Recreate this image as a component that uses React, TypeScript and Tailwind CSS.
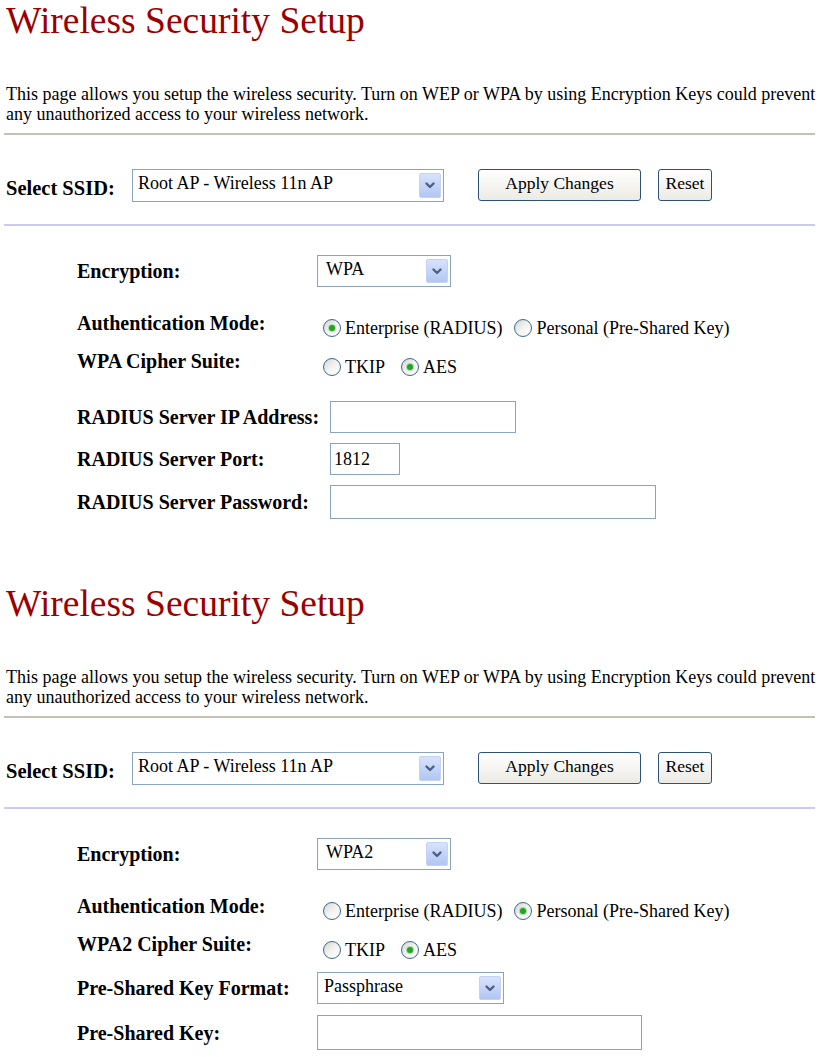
import React from 'react'
import clsx from 'clsx'

type Mode = 'wpa' | 'wpa2'

function Rule({ tone }: { tone: 'grey' | 'lavender' }) {
  return (
    <div
      className={clsx(
        '-ml-[2px] mr-[2px] h-[2px]',
        tone === 'grey' ? 'bg-[#c4c0b5]' : 'bg-[#cbcbf2]'
      )}
    />
  )
}

function Chevron() {
  return (
    <svg width="10" height="7" viewBox="0 0 10 7" fill="none">
      <path
        d="M1.5 1.5 L5 5 L8.5 1.5"
        stroke="#4d6185"
        strokeWidth="2.4"
        strokeLinecap="round"
        strokeLinejoin="round"
      />
    </svg>
  )
}

function Dropdown({
  value,
  className,
  textPad = 'pl-[5px]',
}: {
  value: string
  className?: string
  textPad?: string
}) {
  return (
    <div
      className={clsx(
        'flex shrink-0 items-center border border-[#8aa3c1] bg-white pr-[2px]',
        className
      )}
    >
      <span className={clsx('flex-1 pb-[3px] text-[18px] leading-normal whitespace-nowrap', textPad)}>
        {value}
      </span>
      <span className="flex h-[calc(100%-6px)] w-[22px] items-center justify-center rounded-[2px] border border-[#c4d2f7] bg-gradient-to-b from-[#d8e2fb] to-[#b2c6f3]">
        <Chevron />
      </span>
    </div>
  )
}

function Field({ value = '', className }: { value?: string; className?: string }) {
  return (
    <input
      readOnly
      value={value}
      className={clsx(
        'h-full shrink-0 border border-[#8aa3c1] bg-white px-[3px] text-[18px] outline-none',
        className
      )}
    />
  )
}

function Button({ children, className }: { children: React.ReactNode; className?: string }) {
  return (
    <button
      type="button"
      className={clsx(
        'flex h-[32px] shrink-0 items-center justify-center rounded-[3px] border-[1.5px] border-[#2e5277] bg-gradient-to-b from-white to-[#ebeae3] pb-[4px] text-[17.5px]',
        className
      )}
    >
      {children}
    </button>
  )
}

function Radio({ checked, label }: { checked?: boolean; label: string }) {
  return (
    <span className="flex items-center gap-[4px]">
      <span className="flex h-[18px] w-[18px] shrink-0 items-center justify-center rounded-full border-[1.5px] border-[#3d6890] bg-gradient-to-br from-[#d4d4ce] via-[#f3f3f1] to-white">
        {checked && (
          <span className="h-[6px] w-[6px] rounded-full bg-[#25a325] shadow-[0_0_0_1px_#a6e0a6]" />
        )}
      </span>
      <span className="text-[18px] leading-normal">{label}</span>
    </span>
  )
}

function Row({
  label,
  labelWidth = 'w-[240px]',
  className,
  children,
}: {
  label: string
  labelWidth?: string
  className?: string
  children: React.ReactNode
}) {
  return (
    <div className={clsx('flex items-center pl-[71px]', className)}>
      <span className={clsx('shrink-0 text-[20px] leading-normal font-bold', labelWidth)}>
        {label}
      </span>
      {children}
    </div>
  )
}

function SecuritySection({ mode, className }: { mode: Mode; className?: string }) {
  const isWpa2 = mode === 'wpa2'

  return (
    <section className={className}>
      <h1 className="text-[37.5px] leading-[41px] font-normal text-[#9b0000]">
        Wireless Security Setup
      </h1>
      <p className="mt-[43px] text-[18px] leading-[20px]">
        This page allows you setup the wireless security. Turn on WEP or WPA by using
        Encryption Keys could prevent any unauthorized access to your wireless network.
      </p>
      <div className="mt-[9px]">
        <Rule tone="grey" />
      </div>

      <div className="mt-[33px] flex h-[34px] items-center">
        <span className="mt-[6px] w-[126px] shrink-0 text-[20.5px] leading-normal font-bold">
          Select SSID:
        </span>
        <Dropdown value="Root AP - Wireless 11n AP" className="h-[33px] w-[312px]" />
        <Button className="ml-[34px] w-[163px]">Apply Changes</Button>
        <Button className="ml-[17px] w-[54px]">Reset</Button>
      </div>

      <div className="mt-[22px]">
        <Rule tone="lavender" />
      </div>

      <Row label="Encryption:" className="mt-[29px] h-[32px]">
        <Dropdown
          value={isWpa2 ? 'WPA2' : 'WPA'}
          className="h-[32px] w-[134px]"
          textPad="pl-[8px]"
        />
      </Row>

      <Row label="Authentication Mode:" className="mt-[21px] h-[30px]">
        <div className="mt-[10px] ml-[6px] flex items-center gap-[12px]">
          <Radio checked={!isWpa2} label="Enterprise (RADIUS)" />
          <Radio checked={isWpa2} label="Personal (Pre-Shared Key)" />
        </div>
      </Row>

      <Row label={isWpa2 ? 'WPA2 Cipher Suite:' : 'WPA Cipher Suite:'} className="mt-[8px] h-[30px]">
        <div className="mt-[12px] ml-[6px] flex items-center gap-[16px]">
          <Radio label="TKIP" />
          <Radio checked label="AES" />
        </div>
      </Row>

      {isWpa2 ? (
        <>
          <Row label="Pre-Shared Key Format:" className="mt-[13px] h-[32px]">
            <Dropdown value="Passphrase" className="h-[32px] w-[187px]" textPad="pl-[6px]" />
          </Row>
          <Row label="Pre-Shared Key:" className="mt-[11px] h-[35px]">
            <Field className="w-[325px]" />
          </Row>
        </>
      ) : (
        <>
          <Row label="RADIUS Server IP Address:" labelWidth="w-[253px]" className="mt-[25px] h-[32px]">
            <Field className="w-[186px]" />
          </Row>
          <Row label="RADIUS Server Port:" labelWidth="w-[253px]" className="mt-[10px] h-[32px]">
            <Field value="1812" className="w-[70px]" />
          </Row>
          <Row label="RADIUS Server Password:" labelWidth="w-[253px]" className="mt-[10px] h-[34px]">
            <Field className="w-[326px]" />
          </Row>
        </>
      )}
    </section>
  )
}

export default function App() {
  return (
    <div className="min-h-[1057px] w-[823px] overflow-hidden bg-white px-[6px] font-['Liberation_Serif',serif] text-black">
      <SecuritySection mode="wpa" />
      <SecuritySection mode="wpa2" className="mt-[64px]" />
    </div>
  )
}
